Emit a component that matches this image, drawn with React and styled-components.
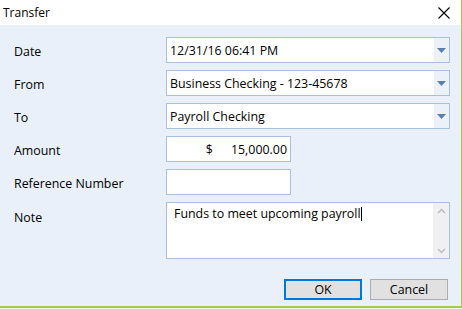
import React from "react";
import styled, { createGlobalStyle } from "styled-components";

const GlobalStyle = createGlobalStyle`
  html, body {
    margin: 0;
    padding: 0;
    background: #f0f0f0;
    overflow: hidden;
  }
  body {
    font-family: "Open Sans", "Noto Sans", "Liberation Sans", sans-serif;
    font-size: 12.4px;
    color: #000;
  }
`;

const Window = styled.div`
  width: 461px;
  height: 306px;
  background: #e9f0fa;
  border-right: 1px solid #a8cc4a;
  border-bottom: 2px solid #a8cc4a;
  display: flex;
  flex-direction: column;
`;

const TitleBar = styled.div`
  height: 25px;
  background: #fff;
  display: flex;
  align-items: center;
  justify-content: space-between;
  padding: 0 10px 0 3px;
  font-size: 12px;
`;

const Close = styled.button`
  border: none;
  background: none;
  padding: 0;
  width: 14px;
  height: 14px;
  display: flex;
  align-items: center;
  justify-content: center;
`;

const Form = styled.div`
  display: grid;
  grid-template-columns: 152px 1fr;
  grid-auto-rows: 26px;
  row-gap: 7px;
  padding: 12px 11px 0 14px;
`;

const Label = styled.div`
  display: flex;
  align-items: ${(p) => (p.top ? "flex-start" : "center")};
  padding-top: ${(p) => (p.top ? "7px" : "3px")};
`;

const Field = styled.div`
  box-sizing: border-box;
  height: 26px;
  width: ${(p) => p.width || "100%"};
  background: #fff;
  border: 1px solid #a9c1e1;
  display: flex;
  align-items: center;
`;

const FieldText = styled.span`
  flex: 1;
  padding-left: 3px;
  white-space: nowrap;
`;

const DropButton = styled.div`
  width: 15px;
  align-self: stretch;
  background: #ecf1f8;
  display: flex;
  align-items: center;
  justify-content: center;
`;

const Money = styled.div`
  flex: 1;
  display: flex;
  justify-content: flex-end;
  padding-right: 3px;
  gap: 18px;
`;

const NoteBox = styled.div`
  grid-row: span 2;
  box-sizing: border-box;
  height: 57px;
  background: #fff;
  border: 1px solid #a9c1e1;
  display: flex;
`;

const NoteText = styled.div`
  flex: 1;
  padding: 2px 0 0 7px;
  display: flex;
  align-items: flex-start;
`;

const Caret = styled.span`
  display: inline-block;
  width: 1px;
  height: 14px;
  background: #000;
  margin-top: 2px;
`;

const Scroll = styled.div`
  width: 16px;
  background: #f0f0f0;
  display: flex;
  flex-direction: column;
  justify-content: space-between;
  align-items: center;
  padding: 5px 0 4px;
`;

const Buttons = styled.div`
  display: flex;
  justify-content: flex-end;
  gap: 8px;
  padding: 18px 13px 0 0;
`;

const Button = styled.button`
  box-sizing: border-box;
  width: 78px;
  height: 21px;
  background: #e1e1e1;
  border: ${(p) => (p.primary ? "2px solid #0078d7" : "1px solid #adadad")};
  font-family: inherit;
  font-size: 12.4px;
  color: #000;
  padding: 0;
`;

const Arrow = () => (
  <svg width="9" height="5" viewBox="0 0 9 5">
    <path d="M0 0h9L4.5 5z" fill="#5b7eb0" />
  </svg>
);

const Chevron = ({ up }) => (
  <svg width="9" height="6" viewBox="0 0 9 6">
    <path
      d={up ? "M1 5l3.5-3.5L8 5" : "M1 1l3.5 3.5L8 1"}
      fill="none"
      stroke="#bdbdbd"
      strokeWidth="1.5"
    />
  </svg>
);

const Select = ({ value }) => (
  <Field>
    <FieldText>{value}</FieldText>
    <DropButton>
      <Arrow />
    </DropButton>
  </Field>
);

export default function App() {
  return (
    <>
      <GlobalStyle />
      <Window>
        <TitleBar>
          <span>Transfer</span>
          <Close>
            <svg width="12" height="12" viewBox="0 0 12 12">
              <path d="M0.5 0.5l11 11M11.5 0.5l-11 11" stroke="#000" strokeWidth="1.1" />
            </svg>
          </Close>
        </TitleBar>
        <Form>
          <Label>Date</Label>
          <Select value="12/31/16 06:41 PM" />
          <Label>From</Label>
          <Select value="Business Checking - 123-45678" />
          <Label>To</Label>
          <Select value="Payroll Checking" />
          <Label>Amount</Label>
          <Field width="125px">
            <Money>
              <span>$</span>
              <span>15,000.00</span>
            </Money>
          </Field>
          <Label>Reference Number</Label>
          <Field width="125px" />
          <Label top>Note</Label>
          <NoteBox>
            <NoteText>
              <span>Funds to meet upcoming payroll</span>
              <Caret />
            </NoteText>
            <Scroll>
              <Chevron up />
              <Chevron />
            </Scroll>
          </NoteBox>
        </Form>
        <Buttons>
          <Button primary>OK</Button>
          <Button>Cancel</Button>
        </Buttons>
      </Window>
    </>
  );
}
